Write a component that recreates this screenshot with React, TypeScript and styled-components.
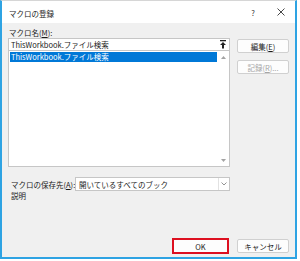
import {ReactNode} from "react";
import styled, {createGlobalStyle} from "styled-components";

const Global = createGlobalStyle`
  html, body {
    margin: 0;
    padding: 0;
    background: #ffffff;
  }
  * {
    box-sizing: border-box;
  }
`;

const Page = styled.div`
  width: 300px;
  height: 261px;
  background: #ffffff;
  font-family: "Noto Sans CJK JP", "Noto Sans", sans-serif;
  font-size: 7.5px;
  color: #1a1a1a;
`;

const Frame = styled.div`
  width: 297px;
  height: 259px;
  border: 2px solid #2ea3e3;
  border-top: 1px solid #d6d6d6;
  display: flex;
  flex-direction: column;
  background: #f0f0f0;
`;

const TitleBar = styled.div`
  height: 22px;
  background: #ffffff;
  display: flex;
  align-items: center;
  padding-left: 7px;
`;

const Title = styled.span`
  flex: 1;
  padding-top: 2px;
`;

const TitleButton = styled.div`
  width: 28px;
  height: 22px;
  display: flex;
  align-items: center;
  justify-content: center;
  color: #333;
`;

const Body = styled.div`
  flex: 1;
  display: flex;
  flex-direction: column;
  padding: 0 6px 3px 6px;
`;

const Label = styled.div`
  height: 11px;
  line-height: 11px;
  margin-top: 4px;
  padding-left: 1px;
`;

const Columns = styled.div`
  display: grid;
  grid-template-columns: 222px 52px;
  column-gap: 7px;
`;

const LeftCol = styled.div`
  display: flex;
  flex-direction: column;
`;

const RightCol = styled.div`
  display: flex;
  flex-direction: column;
  gap: 7px;
  padding-top: 1px;
`;

const NameInput = styled.div`
  height: 13px;
  background: #ffffff;
  border: 1px solid #c6c6c6;
  display: flex;
  align-items: center;
  padding-left: 2px;
`;

const InputText = styled.span`
  flex: 1;
  white-space: nowrap;
`;

const CollapseBtn = styled.div`
  width: 12px;
  height: 11px;
  display: flex;
  align-items: center;
  justify-content: center;
`;

const ListBox = styled.div`
  height: 116px;
  background: #ffffff;
  border: 1px solid #c6c6c6;
  border-top: none;
  display: flex;
`;

const ListItems = styled.div`
  flex: 1;
  padding: 1px 0 0 1px;
`;

const ListItem = styled.div<{$selected?: boolean}>`
  height: 10px;
  line-height: 10px;
  padding-left: 1px;
  white-space: nowrap;
  background: ${p => (p.$selected ? "#0078d7" : "transparent")};
  color: ${p => (p.$selected ? "#ffffff" : "#1a1a1a")};
`;

const ScrollBar = styled.div`
  width: 12px;
  display: flex;
  flex-direction: column;
  justify-content: space-between;
  align-items: center;
  padding: 5px 0 4px 0;
`;

const Button = styled.div<{$disabled?: boolean; $highlight?: boolean}>`
  height: ${p => (p.$highlight ? "16px" : "14px")};
  width: ${p => (p.$highlight ? "57px" : "52px")};
  background: #fdfdfd;
  border: ${p => (p.$highlight ? "2px solid #dd1020" : "1px solid #d0d0d0")};
  border-radius: ${p => (p.$highlight ? "0" : "2px")};
  display: flex;
  align-items: center;
  justify-content: center;
  color: ${p => (p.$disabled ? "#a6a6a6" : "#1a1a1a")};
  white-space: nowrap;
`;

const SaveRow = styled.div`
  margin-top: 10px;
  width: 222px;
  display: flex;
  align-items: center;
  gap: 6px;
`;

const SaveLabel = styled.span`
  width: 61px;
  padding-left: 3px;
  white-space: nowrap;
`;

const Select = styled.div`
  flex: 1;
  height: 14px;
  background: #ffffff;
  border: 1px solid #c6c6c6;
  display: flex;
  align-items: center;
  padding-left: 3px;
`;

const SelectText = styled.span`
  flex: 1;
  white-space: nowrap;
`;

const SelectArrow = styled.div`
  width: 11px;
  height: 12px;
  border-left: 1px solid #e2e2e2;
  display: flex;
  align-items: center;
  justify-content: center;
`;

const Description = styled.div`
  height: 10px;
  line-height: 10px;
  padding-left: 3px;
`;

const Footer = styled.div`
  margin-top: auto;
  display: flex;
  justify-content: flex-end;
  align-items: center;
  gap: 8px;
`;

function CloseIcon() {
    return (
        <svg width="8" height="8" viewBox="0 0 8 8">
            <path d="M0.5 0.5 L7.5 7.5 M7.5 0.5 L0.5 7.5" stroke="#333" strokeWidth="0.9" />
        </svg>
    );
}

function CollapseIcon() {
    return (
        <svg width="6" height="9" viewBox="0 0 6 9">
            <rect x="0" y="0" width="6" height="1.3" fill="#222" />
            <path d="M3 2 L6 5 L4 5 L4 8.5 L2 8.5 L2 5 L0 5 Z" fill="#222" />
        </svg>
    );
}

function Triangle({down}: {down?: boolean}) {
    return (
        <svg width="5" height="3" viewBox="0 0 5 3">
            <path d={down ? "M0 0 L5 0 L2.5 3 Z" : "M0 3 L5 3 L2.5 0 Z"} fill="#a3a3a3" />
        </svg>
    );
}

function Chevron() {
    return (
        <svg width="6" height="4" viewBox="0 0 6 4">
            <path d="M0.5 0.5 L3 3 L5.5 0.5" stroke="#777" strokeWidth="0.8" fill="none" />
        </svg>
    );
}

export default function App(): ReactNode {
    return (
        <Page>
            <Global />
            <Frame>
                <TitleBar>
                    <Title>マクロの登録</Title>
                    <TitleButton>?</TitleButton>
                    <TitleButton><CloseIcon /></TitleButton>
                </TitleBar>
                <Body>
                    <Label>マクロ名(<u>M</u>):</Label>
                    <Columns>
                        <LeftCol>
                            <NameInput>
                                <InputText>ThisWorkbook.ファイル検索</InputText>
                                <CollapseBtn><CollapseIcon /></CollapseBtn>
                            </NameInput>
                            <ListBox>
                                <ListItems>
                                    <ListItem $selected>ThisWorkbook.ファイル検索</ListItem>
                                </ListItems>
                                <ScrollBar>
                                    <Triangle />
                                    <Triangle down />
                                </ScrollBar>
                            </ListBox>
                        </LeftCol>
                        <RightCol>
                            <Button>編集(<u>E</u>)</Button>
                            <Button $disabled>記録(<u>R</u>)...</Button>
                        </RightCol>
                    </Columns>
                    <SaveRow>
                        <SaveLabel>マクロの保存先(<u>A</u>):</SaveLabel>
                        <Select>
                            <SelectText>開いているすべてのブック</SelectText>
                            <SelectArrow><Chevron /></SelectArrow>
                        </Select>
                    </SaveRow>
                    <Description>説明</Description>
                    <Footer>
                        <Button $highlight>OK</Button>
                        <Button>キャンセル</Button>
                    </Footer>
                </Body>
            </Frame>
        </Page>
    );
}
